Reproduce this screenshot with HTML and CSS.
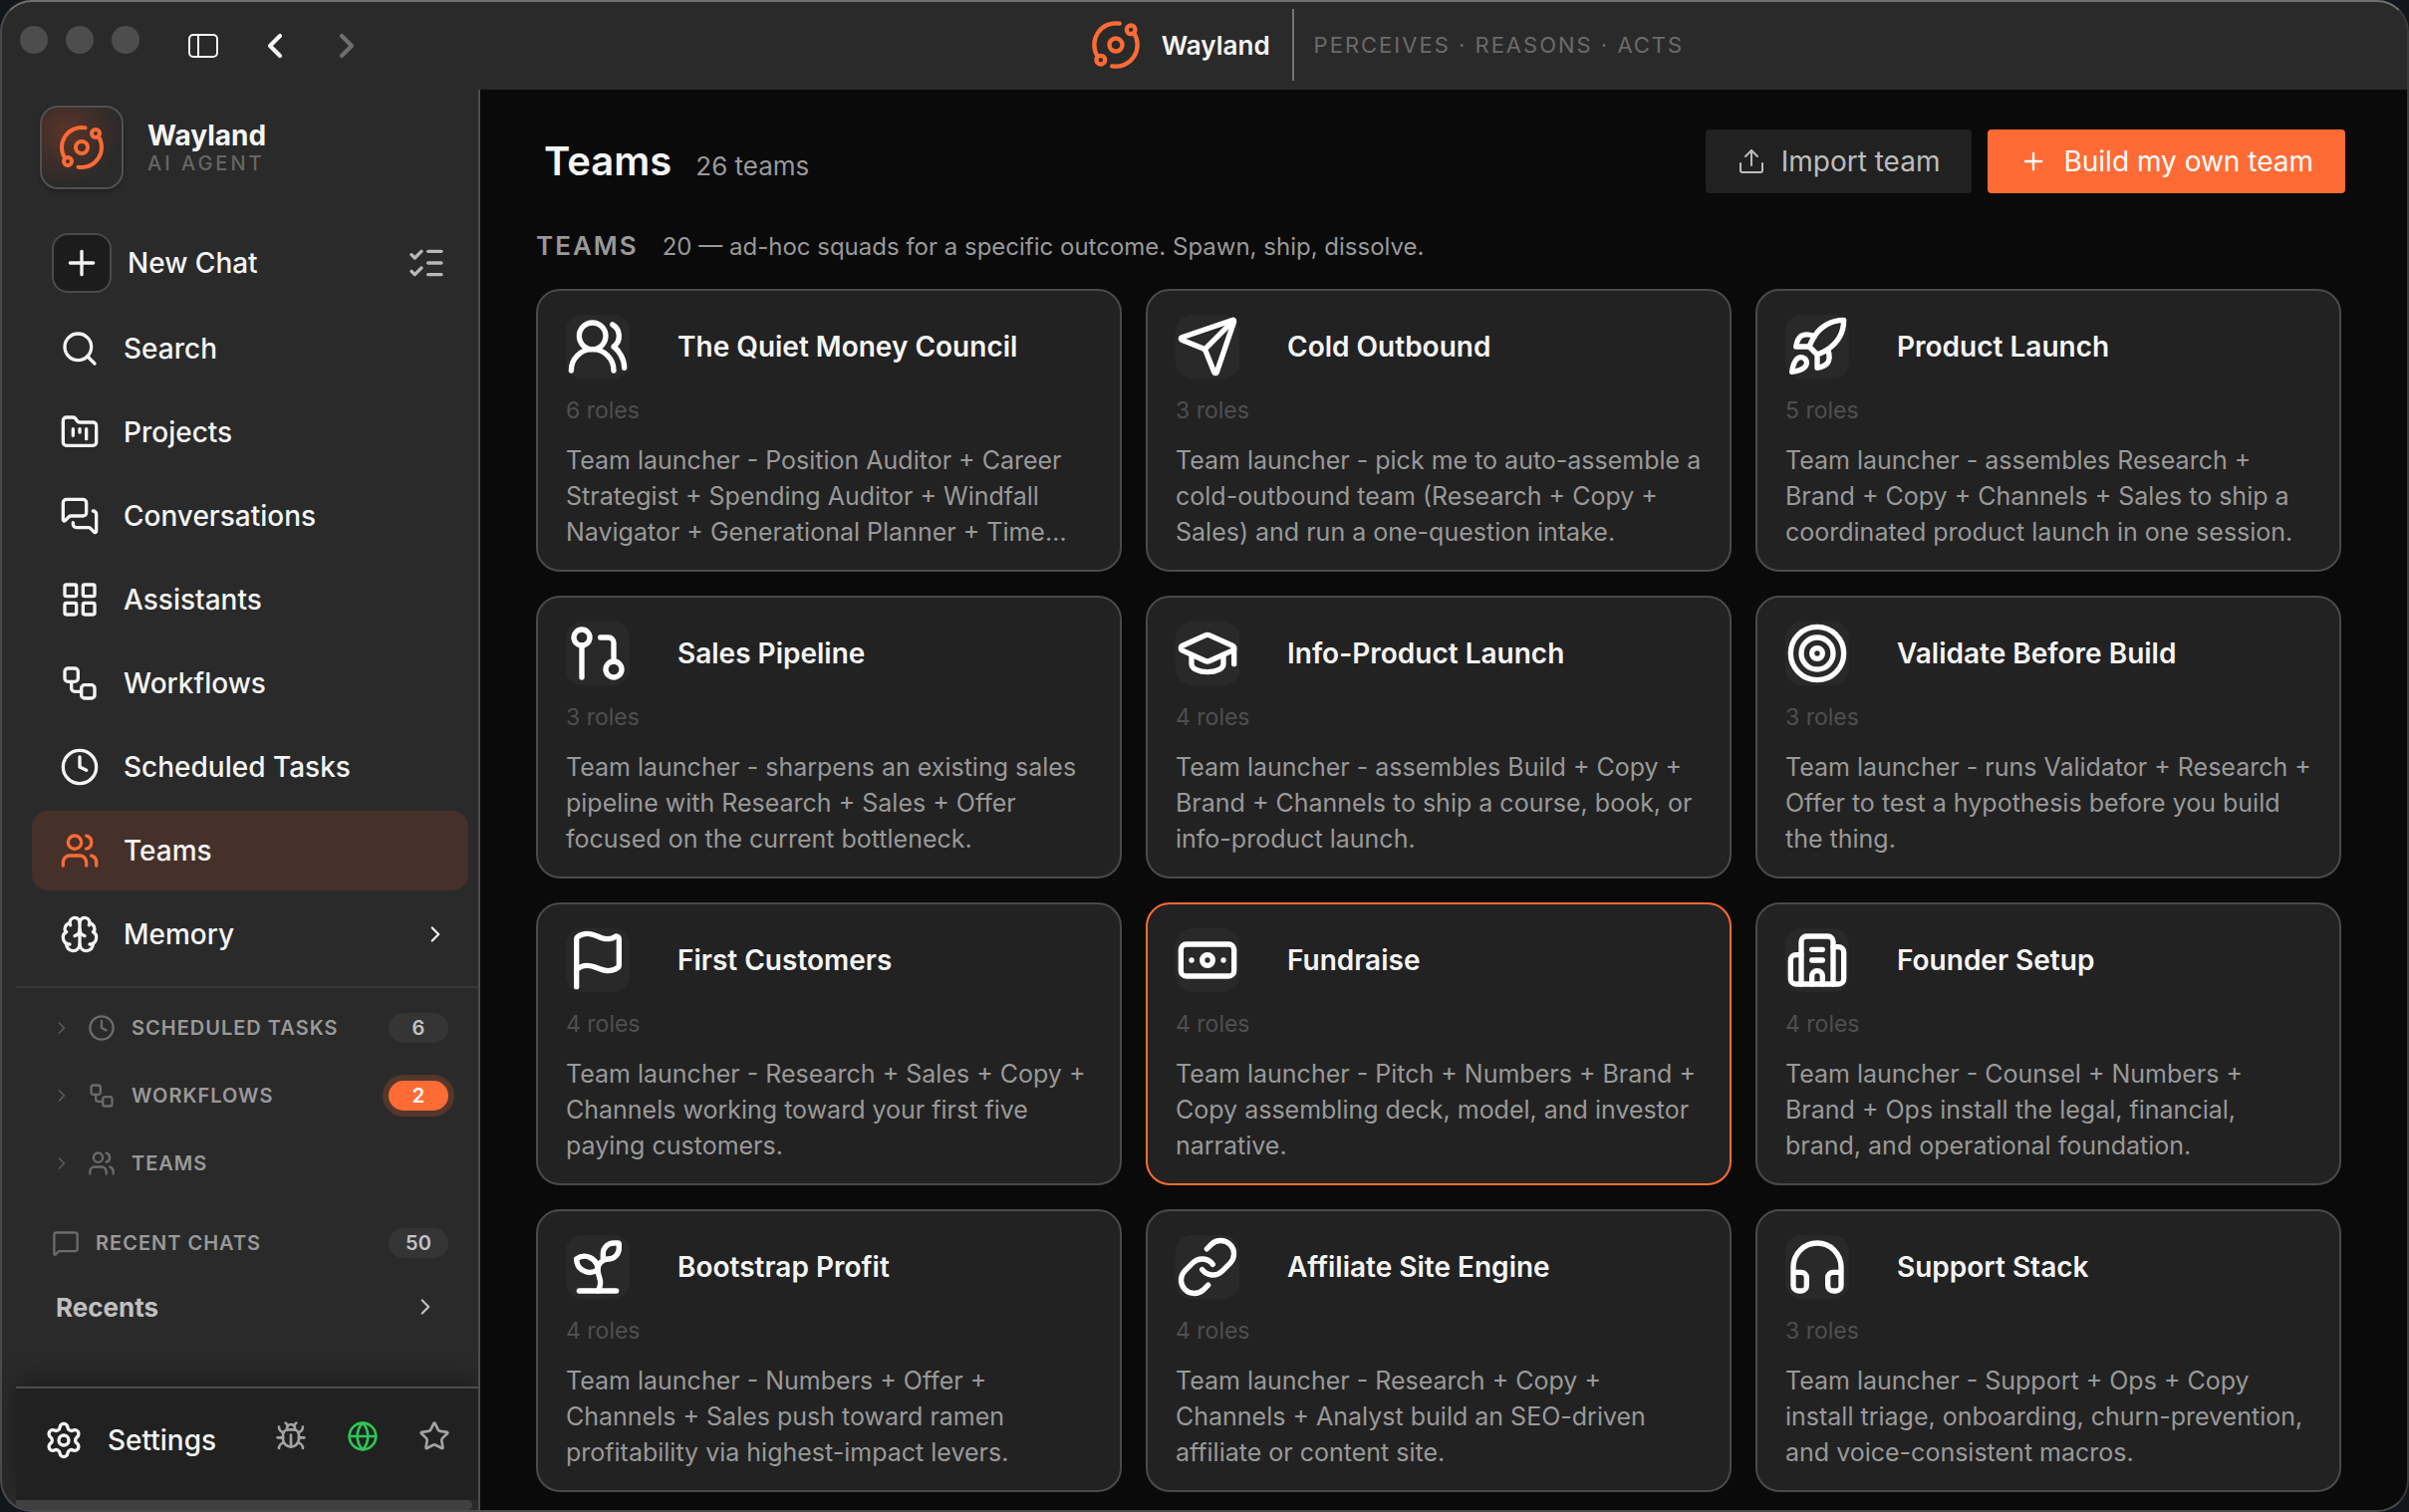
FILE: index.html
```
<!DOCTYPE html>
<html lang="en">
<head>
<meta charset="utf-8">
<meta name="viewport" content="width=device-width, initial-scale=1">
<title>Wayland</title>
<link rel="stylesheet" href="styles.css">
</head>
<body>
<svg class="sprite" aria-hidden="true">
  <symbol id="orbit" viewBox="0 0 24 24"><path d="M20.341 6.484A10 10 0 0 1 10.266 21.85"/><path d="M3.659 17.516A10 10 0 0 1 13.74 2.152"/><circle cx="12" cy="12" r="3"/><circle cx="19" cy="5" r="2"/><circle cx="5" cy="19" r="2"/></symbol>
  <symbol id="panel" viewBox="0 0 32 26"><rect x="2" y="2" width="28" height="22" rx="4"/><path d="M11 2v22"/></symbol>
  <symbol id="left" viewBox="0 0 24 24"><path d="m15 18-6-6 6-6"/></symbol>
  <symbol id="right" viewBox="0 0 24 24"><path d="m9 18 6-6-6-6"/></symbol>
  <symbol id="plus" viewBox="0 0 24 24"><path d="M5 12h14"/><path d="M12 5v14"/></symbol>
  <symbol id="checks" viewBox="0 0 24 24"><path d="M13 5h8"/><path d="M13 12h8"/><path d="M13 19h8"/><path d="m3 17 2 2 4-4"/><path d="m3 7 2 2 4-4"/></symbol>
  <symbol id="search" viewBox="0 0 24 24"><circle cx="11" cy="11" r="8"/><path d="m21 21-4.34-4.34"/></symbol>
  <symbol id="kanban" viewBox="0 0 24 24"><path d="M4 20h16a2 2 0 0 0 2-2V8a2 2 0 0 0-2-2h-7.93a2 2 0 0 1-1.66-.9l-.82-1.2A2 2 0 0 0 7.93 3H4a2 2 0 0 0-2 2v13c0 1.1.9 2 2 2Z"/><path d="M8 10v4"/><path d="M12 10v2"/><path d="M16 10v6"/></symbol>
  <symbol id="messages" viewBox="0 0 24 24"><path d="M16 10a2 2 0 0 1-2 2H6.828a2 2 0 0 0-1.414.586l-2.202 2.202A.71.71 0 0 1 2 14.286V4a2 2 0 0 1 2-2h10a2 2 0 0 1 2 2z"/><path d="M20 9a2 2 0 0 1 2 2v10.286a.71.71 0 0 1-1.212.502l-2.202-2.202A2 2 0 0 0 17.172 19H10a2 2 0 0 1-2-2v-1"/></symbol>
  <symbol id="grid" viewBox="0 0 24 24"><rect width="7" height="7" x="3" y="3" rx="1"/><rect width="7" height="7" x="14" y="3" rx="1"/><rect width="7" height="7" x="14" y="14" rx="1"/><rect width="7" height="7" x="3" y="14" rx="1"/></symbol>
  <symbol id="workflow" viewBox="0 0 24 24"><rect width="8" height="8" x="3" y="3" rx="2"/><path d="M7 11v4a2 2 0 0 0 2 2h4"/><rect width="8" height="8" x="13" y="13" rx="2"/></symbol>
  <symbol id="clock" viewBox="0 0 24 24"><circle cx="12" cy="12" r="10"/><path d="M12 6v6l4 2"/></symbol>
  <symbol id="users" viewBox="0 0 24 24"><path d="M16 21v-2a4 4 0 0 0-4-4H6a4 4 0 0 0-4 4v2"/><circle cx="9" cy="7" r="4"/><path d="M22 21v-2a4 4 0 0 0-3-3.87"/><path d="M16 3.13a4 4 0 0 1 0 7.75"/></symbol>
  <symbol id="brain" viewBox="0 0 24 24"><path d="M12 18V5"/><path d="M15 13a4.17 4.17 0 0 1-3-4 4.17 4.17 0 0 1-3 4"/><path d="M17.598 6.5A3 3 0 1 0 12 5a3 3 0 1 0-5.598 1.5"/><path d="M17.997 5.125a4 4 0 0 1 2.526 5.77"/><path d="M18 18a4 4 0 0 0 2-7.464"/><path d="M19.967 17.483A4 4 0 1 1 12 18a4 4 0 1 1-7.967-.517"/><path d="M6 18a4 4 0 0 1-2-7.464"/><path d="M6.003 5.125a4 4 0 0 0-2.526 5.77"/></symbol>
  <symbol id="message" viewBox="0 0 24 24"><path d="M22 17a2 2 0 0 1-2 2H6.828a2 2 0 0 0-1.414.586l-2.202 2.202A.71.71 0 0 1 2 21.286V5a2 2 0 0 1 2-2h16a2 2 0 0 1 2 2z"/></symbol>
  <symbol id="gear" viewBox="0 0 24 24"><path d="M9.671 4.136a2.34 2.34 0 0 1 4.659 0 2.34 2.34 0 0 0 3.319 1.915 2.34 2.34 0 0 1 2.33 4.033 2.34 2.34 0 0 0 0 3.831 2.34 2.34 0 0 1-2.33 4.033 2.34 2.34 0 0 0-3.319 1.915 2.34 2.34 0 0 1-4.659 0 2.34 2.34 0 0 0-3.32-1.915 2.34 2.34 0 0 1-2.33-4.033 2.34 2.34 0 0 0 0-3.831A2.34 2.34 0 0 1 6.35 6.051a2.34 2.34 0 0 0 3.319-1.915"/><circle cx="12" cy="12" r="3"/></symbol>
  <symbol id="bug" viewBox="0 0 24 24"><path d="m8 2 1.88 1.88"/><path d="M14.12 3.88 16 2"/><path d="M9 7.13v-1a3.003 3.003 0 1 1 6 0v1"/><path d="M12 20c-3.3 0-6-2.7-6-6v-3a4 4 0 0 1 4-4h4a4 4 0 0 1 4 4v3c0 3.3-2.7 6-6 6"/><path d="M12 20v-9"/><path d="M6.53 9C4.6 8.8 3 7.1 3 5"/><path d="M6 13H2"/><path d="M3 21c0-2.1 1.7-3.9 3.8-4"/><path d="M20.97 5c0 2.1-1.6 3.8-3.5 4"/><path d="M22 13h-4"/><path d="M17.2 17c2.1.1 3.8 1.9 3.8 4"/></symbol>
  <symbol id="globe" viewBox="0 0 24 24"><circle cx="12" cy="12" r="10"/><path d="M12 2a14.5 14.5 0 0 0 0 20 14.5 14.5 0 0 0 0-20"/><path d="M2 12h20"/></symbol>
  <symbol id="star" viewBox="0 0 24 24"><path d="M11.525 2.295a.53.53 0 0 1 .95 0l2.31 4.679a2.123 2.123 0 0 0 1.595 1.16l5.166.756a.53.53 0 0 1 .294.904l-3.736 3.638a2.123 2.123 0 0 0-.611 1.878l.882 5.14a.53.53 0 0 1-.771.56l-4.618-2.428a2.122 2.122 0 0 0-1.973 0L6.396 21.01a.53.53 0 0 1-.77-.56l.881-5.139a2.122 2.122 0 0 0-.611-1.879L2.16 9.795a.53.53 0 0 1 .294-.906l5.165-.755a2.122 2.122 0 0 0 1.597-1.16z"/></symbol>
  <symbol id="upload" viewBox="0 0 28 28"><path d="M3 16v7a2 2 0 0 0 2 2h18a2 2 0 0 0 2-2v-7"/><path d="M14 18V3"/><path d="m8 9 6-6 6 6"/></symbol>
  <symbol id="users-round" viewBox="0 0 24 24"><path d="M18 21a8 8 0 0 0-16 0"/><circle cx="10" cy="8" r="5"/><path d="M22 20c0-3.37-2-6.5-4-8a5 5 0 0 0-.45-8.3"/></symbol>
  <symbol id="send" viewBox="0 0 24 24"><path d="M14.536 21.686a.5.5 0 0 0 .937-.024l6.5-19a.496.496 0 0 0-.635-.635l-19 6.5a.5.5 0 0 0-.024.937l7.93 3.18a2 2 0 0 1 1.112 1.11z"/><path d="m21.854 2.147-10.94 10.939"/></symbol>
  <symbol id="rocket" viewBox="0 0 24 24"><path d="M4.5 16.5c-1.5 1.26-2 5-2 5s3.74-.5 5-2c.71-.84.7-2.13-.09-2.91a2.18 2.18 0 0 0-2.91-.09z"/><path d="m12 15-3-3a22 22 0 0 1 2-3.95A12.88 12.88 0 0 1 22 2c0 2.72-.78 7.5-6 11a22.35 22.35 0 0 1-4 2z"/><path d="M9 12H4s.55-3.03 2-4c1.62-1.08 5 0 5 0"/><path d="M12 15v5s3.03-.55 4-2c1.08-1.62 0-5 0-5"/></symbol>
  <symbol id="pull" viewBox="0 0 24 24"><circle cx="18" cy="18" r="3"/><circle cx="6" cy="6" r="3"/><path d="M13 6h3a2 2 0 0 1 2 2v7"/><path d="M6 9v12"/></symbol>
  <symbol id="cap" viewBox="0 0 24 24"><path d="M21.42 10.922a1 1 0 0 0-.019-1.838L12.83 5.18a2 2 0 0 0-1.66 0L2.6 9.08a1 1 0 0 0 0 1.832l8.57 3.908a2 2 0 0 0 1.66 0z"/><path d="M22 10v6"/><path d="M6 12.5V16a6 3 0 0 0 12 0v-3.5"/></symbol>
  <symbol id="target" viewBox="0 0 24 24"><circle cx="12" cy="12" r="10"/><circle cx="12" cy="12" r="6"/><circle cx="12" cy="12" r="2"/></symbol>
  <symbol id="flag" viewBox="0 0 24 24"><path d="M4 22V4a1 1 0 0 1 .4-.8A6 6 0 0 1 8 2c3 0 5 2 7.333 2q2 0 3.067-.8A1 1 0 0 1 20 4v10a1 1 0 0 1-.4.8A6 6 0 0 1 16 16c-3 0-5-2-8-2a6 6 0 0 0-4 1.528"/></symbol>
  <symbol id="banknote" viewBox="0 0 24 24"><rect width="20" height="12" x="2" y="6" rx="2"/><circle cx="12" cy="12" r="2"/><path d="M6 12h.01M18 12h.01"/></symbol>
  <symbol id="building" viewBox="0 0 24 24"><path d="M10 12h4"/><path d="M10 8h4"/><path d="M14 21v-3a2 2 0 0 0-4 0v3"/><path d="M6 10H4a2 2 0 0 0-2 2v7a2 2 0 0 0 2 2h16a2 2 0 0 0 2-2V9a2 2 0 0 0-2-2h-2"/><path d="M6 21V5a2 2 0 0 1 2-2h8a2 2 0 0 1 2 2v16"/></symbol>
  <symbol id="sprout" viewBox="0 0 24 24"><path d="M14 9.536V7a4 4 0 0 1 4-4h1.5a.5.5 0 0 1 .5.5V5a4 4 0 0 1-4 4 4 4 0 0 0-4 4c0 2 1 3 1 5a5 5 0 0 1-1 3"/><path d="M4 9a5 5 0 0 1 8 4 5 5 0 0 1-8-4"/><path d="M5 21h14"/></symbol>
  <symbol id="link" viewBox="0 0 24 24"><path d="M10 13a5 5 0 0 0 7.54.54l3-3a5 5 0 0 0-7.07-7.07l-1.72 1.71"/><path d="M14 11a5 5 0 0 0-7.54-.54l-3 3a5 5 0 0 0 7.07 7.07l1.71-1.71"/></symbol>
  <symbol id="headphones" viewBox="0 0 24 24"><path d="M3 14h3a2 2 0 0 1 2 2v3a2 2 0 0 1-2 2H5a2 2 0 0 1-2-2v-7a9 9 0 0 1 18 0v7a2 2 0 0 1-2 2h-1a2 2 0 0 1-2-2v-3a2 2 0 0 1 2-2h3"/></symbol>
</svg>

<div class="window">
  <header class="titlebar">
    <div class="controls">
      <div class="lights">
        <button class="light" aria-label="Close"></button>
        <button class="light" aria-label="Minimize"></button>
        <button class="light" aria-label="Zoom"></button>
      </div>
      <button class="bar-button" aria-label="Toggle sidebar"><svg class="icon icon-panel"><use href="#panel"/></svg></button>
      <button class="bar-button" aria-label="Back"><svg class="icon icon-history"><use href="#left"/></svg></button>
      <button class="bar-button bar-button-off" aria-label="Forward"><svg class="icon icon-history"><use href="#right"/></svg></button>
    </div>
    <div class="app-title">
      <svg class="icon icon-brand"><use href="#orbit"/></svg>
      <span class="app-name">Wayland</span>
      <span class="app-motto">PERCEIVES · REASONS · ACTS</span>
    </div>
  </header>

  <div class="body">
    <aside class="sidebar">
      <div class="brand">
        <span class="brand-tile"><svg class="icon icon-logo"><use href="#orbit"/></svg></span>
        <div>
          <div class="brand-name">Wayland</div>
          <div class="brand-sub">AI AGENT</div>
        </div>
      </div>

      <div class="new-chat">
        <button class="new-chat-button"><span class="new-chat-box"><svg class="icon icon-nav"><use href="#plus"/></svg></span>New Chat</button>
        <button class="bar-button bar-button-soft" aria-label="Select chats"><svg class="icon icon-checks"><use href="#checks"/></svg></button>
      </div>

      <nav class="nav">
        <a class="nav-item" href="#"><svg class="icon icon-nav"><use href="#search"/></svg>Search</a>
        <a class="nav-item" href="#"><svg class="icon icon-nav"><use href="#kanban"/></svg>Projects</a>
        <a class="nav-item" href="#"><svg class="icon icon-nav"><use href="#messages"/></svg>Conversations</a>
        <a class="nav-item" href="#"><svg class="icon icon-nav"><use href="#grid"/></svg>Assistants</a>
        <a class="nav-item" href="#"><svg class="icon icon-nav"><use href="#workflow"/></svg>Workflows</a>
        <a class="nav-item" href="#"><svg class="icon icon-nav"><use href="#clock"/></svg>Scheduled Tasks</a>
        <a class="nav-item nav-item-active" href="#" aria-current="page"><svg class="icon icon-nav"><use href="#users"/></svg>Teams</a>
        <a class="nav-item" href="#"><svg class="icon icon-nav"><use href="#brain"/></svg>Memory<svg class="icon icon-chevron"><use href="#right"/></svg></a>
      </nav>

      <div class="sections">
        <button class="section"><svg class="icon icon-fold"><use href="#right"/></svg><svg class="icon icon-section"><use href="#clock"/></svg>SCHEDULED TASKS<span class="badge">6</span></button>
        <button class="section"><svg class="icon icon-fold"><use href="#right"/></svg><svg class="icon icon-section"><use href="#workflow"/></svg>WORKFLOWS<span class="badge badge-hot">2</span></button>
        <button class="section"><svg class="icon icon-fold"><use href="#right"/></svg><svg class="icon icon-section"><use href="#users"/></svg>TEAMS</button>
        <div class="section section-chats"><svg class="icon icon-section"><use href="#message"/></svg>RECENT CHATS<span class="badge">50</span></div>
        <button class="recents">Recents<svg class="icon icon-chevron"><use href="#right"/></svg></button>
      </div>

      <footer class="dock">
        <a class="settings" href="#"><svg class="icon icon-nav"><use href="#gear"/></svg>Settings</a>
        <div class="dock-actions">
          <button class="bar-button bar-button-dim" aria-label="Report a bug"><svg class="icon icon-dock"><use href="#bug"/></svg></button>
          <button class="bar-button bar-button-live" aria-label="Connection"><svg class="icon icon-dock"><use href="#globe"/></svg></button>
          <button class="bar-button bar-button-dim" aria-label="Favorites"><svg class="icon icon-dock"><use href="#star"/></svg></button>
        </div>
      </footer>
      <div class="scroll-track"></div>
    </aside>

    <main class="main">
      <div class="page-head">
        <h1 class="page-title">Teams</h1>
        <span class="page-count">26 teams</span>
        <div class="page-actions">
          <button class="action"><svg class="icon icon-action"><use href="#upload"/></svg>Import team</button>
          <button class="action action-primary"><svg class="icon icon-action"><use href="#plus"/></svg>Build my own team</button>
        </div>
      </div>
      <div class="group-head">
        <h2 class="group-title">TEAMS</h2>
        <span class="group-note">20 — ad-hoc squads for a specific outcome. Spawn, ship, dissolve.</span>
      </div>
      <div class="cards">
        <article class="card">
          <div class="card-head"><span class="tile"><svg class="icon icon-card"><use href="#users-round"/></svg></span><h3 class="card-title">The Quiet Money Council</h3></div>
          <div class="roles">6 roles</div>
          <p class="desc">Team launcher - Position Auditor + Career Strategist + Spending Auditor + Windfall Navigator + Generational Planner + Time…</p>
        </article>
        <article class="card">
          <div class="card-head"><span class="tile"><svg class="icon icon-card"><use href="#send"/></svg></span><h3 class="card-title">Cold Outbound</h3></div>
          <div class="roles">3 roles</div>
          <p class="desc">Team launcher - pick me to auto-assemble a cold-outbound team (Research + Copy + Sales) and run a one-question intake.</p>
        </article>
        <article class="card">
          <div class="card-head"><span class="tile"><svg class="icon icon-card"><use href="#rocket"/></svg></span><h3 class="card-title">Product Launch</h3></div>
          <div class="roles">5 roles</div>
          <p class="desc">Team launcher - assembles Research + Brand + Copy + Channels + Sales to ship a coordinated product launch in one session.</p>
        </article>
        <article class="card">
          <div class="card-head"><span class="tile"><svg class="icon icon-card"><use href="#pull"/></svg></span><h3 class="card-title">Sales Pipeline</h3></div>
          <div class="roles">3 roles</div>
          <p class="desc">Team launcher - sharpens an existing sales pipeline with Research + Sales + Offer focused on the current bottleneck.</p>
        </article>
        <article class="card">
          <div class="card-head"><span class="tile"><svg class="icon icon-card"><use href="#cap"/></svg></span><h3 class="card-title">Info-Product Launch</h3></div>
          <div class="roles">4 roles</div>
          <p class="desc">Team launcher - assembles Build + Copy + Brand + Channels to ship a course, book, or info-product launch.</p>
        </article>
        <article class="card">
          <div class="card-head"><span class="tile"><svg class="icon icon-card"><use href="#target"/></svg></span><h3 class="card-title">Validate Before Build</h3></div>
          <div class="roles">3 roles</div>
          <p class="desc">Team launcher - runs Validator + Research + Offer to test a hypothesis before you build the thing.</p>
        </article>
        <article class="card">
          <div class="card-head"><span class="tile"><svg class="icon icon-card"><use href="#flag"/></svg></span><h3 class="card-title">First Customers</h3></div>
          <div class="roles">4 roles</div>
          <p class="desc">Team launcher - Research + Sales + Copy + Channels working toward your first five paying customers.</p>
        </article>
        <article class="card card-active">
          <div class="card-head"><span class="tile"><svg class="icon icon-card"><use href="#banknote"/></svg></span><h3 class="card-title">Fundraise</h3></div>
          <div class="roles">4 roles</div>
          <p class="desc">Team launcher - Pitch + Numbers + Brand + Copy assembling deck, model, and investor narrative.</p>
        </article>
        <article class="card">
          <div class="card-head"><span class="tile"><svg class="icon icon-card"><use href="#building"/></svg></span><h3 class="card-title">Founder Setup</h3></div>
          <div class="roles">4 roles</div>
          <p class="desc">Team launcher - Counsel + Numbers + Brand + Ops install the legal, financial, brand, and operational foundation.</p>
        </article>
        <article class="card">
          <div class="card-head"><span class="tile"><svg class="icon icon-card"><use href="#sprout"/></svg></span><h3 class="card-title">Bootstrap Profit</h3></div>
          <div class="roles">4 roles</div>
          <p class="desc">Team launcher - Numbers + Offer + Channels + Sales push toward ramen profitability via highest-impact levers.</p>
        </article>
        <article class="card">
          <div class="card-head"><span class="tile"><svg class="icon icon-card"><use href="#link"/></svg></span><h3 class="card-title">Affiliate Site Engine</h3></div>
          <div class="roles">4 roles</div>
          <p class="desc">Team launcher - Research + Copy + Channels + Analyst build an SEO-driven affiliate or content site.</p>
        </article>
        <article class="card">
          <div class="card-head"><span class="tile"><svg class="icon icon-card"><use href="#headphones"/></svg></span><h3 class="card-title">Support Stack</h3></div>
          <div class="roles">3 roles</div>
          <p class="desc">Team launcher - Support + Ops + Copy install triage, onboarding, churn-prevention, and voice-consistent macros.</p>
        </article>
      </div>
    </main>
  </div>
</div>
</body>
</html>
```
FILE: styles.css
```
* { box-sizing: border-box; }

body {
  margin: 0;
  background: #14161d;
  color: #f5f5f5;
  font-family: Inter, "Liberation Sans", sans-serif;
  font-size: 24px;
}

h1, h2, h3, p { margin: 0; }

button {
  padding: 0;
  border: 0;
  background: none;
  color: inherit;
  font: inherit;
  cursor: pointer;
}

a { color: inherit; text-decoration: none; }

.sprite { display: none; }

.icon {
  display: block;
  flex: none;
  fill: none;
  stroke: currentColor;
  stroke-width: 2;
  stroke-linecap: round;
  stroke-linejoin: round;
}

.icon-panel { width: 32px; height: 26px; margin-right: 4px; }
.icon-history { width: 40px; height: 40px; stroke-width: 2.5; }
.icon-brand { width: 52px; height: 52px; color: #ff6b35; }
.icon-logo { width: 48px; height: 48px; color: #ff6b35; }
.icon-nav { width: 40px; height: 40px; }
.icon-checks { width: 40px; height: 40px; }
.icon-chevron { width: 26px; height: 26px; margin-left: auto; }
.icon-fold { width: 20px; height: 20px; color: #5c5c5c; }
.icon-section { width: 28px; height: 28px; color: #6b6b6b; }
.icon-dock { width: 32px; height: 32px; }
.icon-action { width: 28px; height: 28px; }
.icon-card { width: 64px; height: 64px; color: #fff; }

/* Window frame */
.window {
  display: flex;
  flex-direction: column;
  height: 100vh;
  border: 2px solid #4a4a4a;
  border-top-color: #707070;
  border-right-color: #3a3a3a;
  border-radius: 32px;
  background: #2a2a2a;
  overflow: hidden;
}

.titlebar {
  display: flex;
  flex: none;
  align-items: center;
  height: 88px;
}

.controls {
  display: flex;
  align-items: center;
  padding-left: 18px;
}

.lights {
  display: flex;
  gap: 18px;
  margin-right: 48px;
  padding-bottom: 12px;
}

.light {
  width: 28px;
  height: 28px;
  border-radius: 50%;
  background: #4d4d4d;
}

.bar-button { display: flex; }
.bar-button + .bar-button { margin-left: 32px; }
.bar-button-off { color: #6e6e6e; }
.bar-button-soft { color: #b8b8b8; }
.bar-button-dim { color: #a3a3a3; }
.bar-button-live { color: #2dc653; }

.app-title {
  display: flex;
  flex: 1;
  align-items: center;
  justify-content: center;
  padding-bottom: 2px;
}

.app-name {
  margin: 0 22px 0 20px;
  font-size: 26px;
  font-weight: 600;
}

.app-motto {
  padding-left: 20px;
  border-left: 2px solid #757575;
  color: #6b6b6b;
  font-size: 22px;
  line-height: 72px;
  letter-spacing: 2px;
}

.body {
  display: flex;
  flex: 1;
  min-height: 0;
}

/* Sidebar */
.sidebar {
  display: flex;
  flex: none;
  flex-direction: column;
  width: 480px;
  padding: 16px 0 0 14px;
  border-right: 2px solid #4d4d4d;
  font-size: 28px;
  font-weight: 500;
}

.brand {
  display: flex;
  align-items: center;
  gap: 24px;
  padding-left: 24px;
}

.brand-tile {
  display: flex;
  align-items: center;
  justify-content: center;
  width: 84px;
  height: 84px;
  border: 2px solid #505050;
  border-radius: 18px;
  background: radial-gradient(circle at 30% 30%, #5a3429, #2a2a2a 70%);
  box-shadow: 0 2px 4px rgba(0, 0, 0, 0.3);
}

.brand-name { font-weight: 700; line-height: 32px; }

.brand-sub {
  color: #666;
  font-size: 20px;
  font-weight: 500;
  line-height: 24px;
  letter-spacing: 3px;
}

.new-chat {
  display: flex;
  align-items: center;
  justify-content: space-between;
  margin: 44px 32px 16px 36px;
}

.new-chat-button {
  display: flex;
  align-items: center;
  gap: 16px;
}

.new-chat-box {
  display: flex;
  align-items: center;
  justify-content: center;
  width: 60px;
  height: 60px;
  border: 2px solid #4a4a4a;
  border-radius: 16px;
  background: #1c1c1c;
}

.nav {
  display: flex;
  flex-direction: column;
  gap: 4px;
  padding: 0 10px 12px 16px;
}

.nav-item {
  display: flex;
  align-items: center;
  gap: 24px;
  height: 80px;
  padding: 0 20px 0 28px;
  border-radius: 16px;
}

.nav-item-active { background: #45302a; }
.nav-item-active .icon { color: #ff6b35; }

.sections {
  padding: 6px 0;
  border-top: 2px solid #383838;
}

.section {
  display: flex;
  align-items: center;
  width: 100%;
  height: 68px;
  gap: 16px;
  padding: 0 30px 0 36px;
  color: #999;
  font-size: 20px;
  font-weight: 600;
  letter-spacing: 1px;
}

.section-chats { margin-top: 12px; }

.badge {
  width: 60px;
  margin-left: auto;
  border-radius: 15px;
  background: #353535;
  color: #c4c4c4;
  letter-spacing: 0;
  line-height: 30px;
  text-align: center;
}

.badge-hot {
  background: #ff6b35;
  box-shadow: 0 0 0 6px #55362b;
  color: #fff;
}

.recents {
  display: flex;
  align-items: center;
  width: 100%;
  height: 60px;
  padding: 0 40px;
  color: #c0c0c0;
  font-size: 26px;
  font-weight: 700;
}

.dock {
  display: flex;
  align-items: center;
  justify-content: space-between;
  height: 114px;
  margin-top: auto;
  padding: 0 28px 8px;
  border-top: 2px solid #4d4d4d;
  background: #212121;
  box-shadow: 0 -8px 24px rgba(0, 0, 0, 0.3);
  clip-path: inset(-40px 0 0 -14px);
}

.settings {
  display: flex;
  align-items: center;
  gap: 24px;
}

.dock-actions { display: flex; padding-bottom: 8px; }
.dock-actions .bar-button + .bar-button { margin-left: 40px; }

.scroll-track {
  height: 10px;
  margin-right: 6px;
  border-radius: 0 6px 6px 0;
  background: #404040;
}

/* Team catalogue */
.main {
  flex: 1;
  min-width: 0;
  padding: 40px 66px 0 56px;
  background: #0a0a0a;
  overflow: hidden;
}

.page-head {
  display: flex;
  align-items: baseline;
  height: 64px;
  padding-left: 8px;
  margin-right: -4px;
}

.page-title {
  font-size: 40px;
  font-weight: 600;
  line-height: 64px;
}

.page-count {
  margin-left: 24px;
  color: #999;
  font-size: 26px;
}

.page-actions {
  display: flex;
  align-self: stretch;
  gap: 16px;
  margin-left: auto;
}

.action {
  display: flex;
  align-items: center;
  gap: 16px;
  padding: 0 32px;
  border-radius: 4px;
  background: #212121;
  color: #bdbdbd;
  font-size: 28px;
}

.action-primary { background: #ff6b35; color: #fff; }

.group-head {
  display: flex;
  align-items: baseline;
  gap: 24px;
  height: 64px;
  margin-top: 32px;
}

.group-title {
  color: #999;
  font-size: 26px;
  font-weight: 600;
  line-height: 42px;
  letter-spacing: 2px;
}

.group-note { color: #999; font-size: 24px; }

.cards {
  display: grid;
  grid-template-columns: repeat(3, 1fr);
  gap: 24px;
}

.card {
  padding: 24px 28px 20px;
  border: 2px solid #4a4a4a;
  border-radius: 24px;
  background: #222;
}

.card-active { border-color: #ff6b35; }

.card-head {
  display: flex;
  align-items: center;
  gap: 48px;
}

.tile {
  flex: none;
  border-radius: 16px;
  background: #292929;
}

.card-title { font-size: 28px; font-weight: 600; }

.roles {
  margin: 12px 0;
  color: #4f4f4f;
  font-size: 23px;
  line-height: 40px;
}

.desc {
  min-height: 108px;
  color: #999;
  font-size: 25px;
  line-height: 36px;
}
```
